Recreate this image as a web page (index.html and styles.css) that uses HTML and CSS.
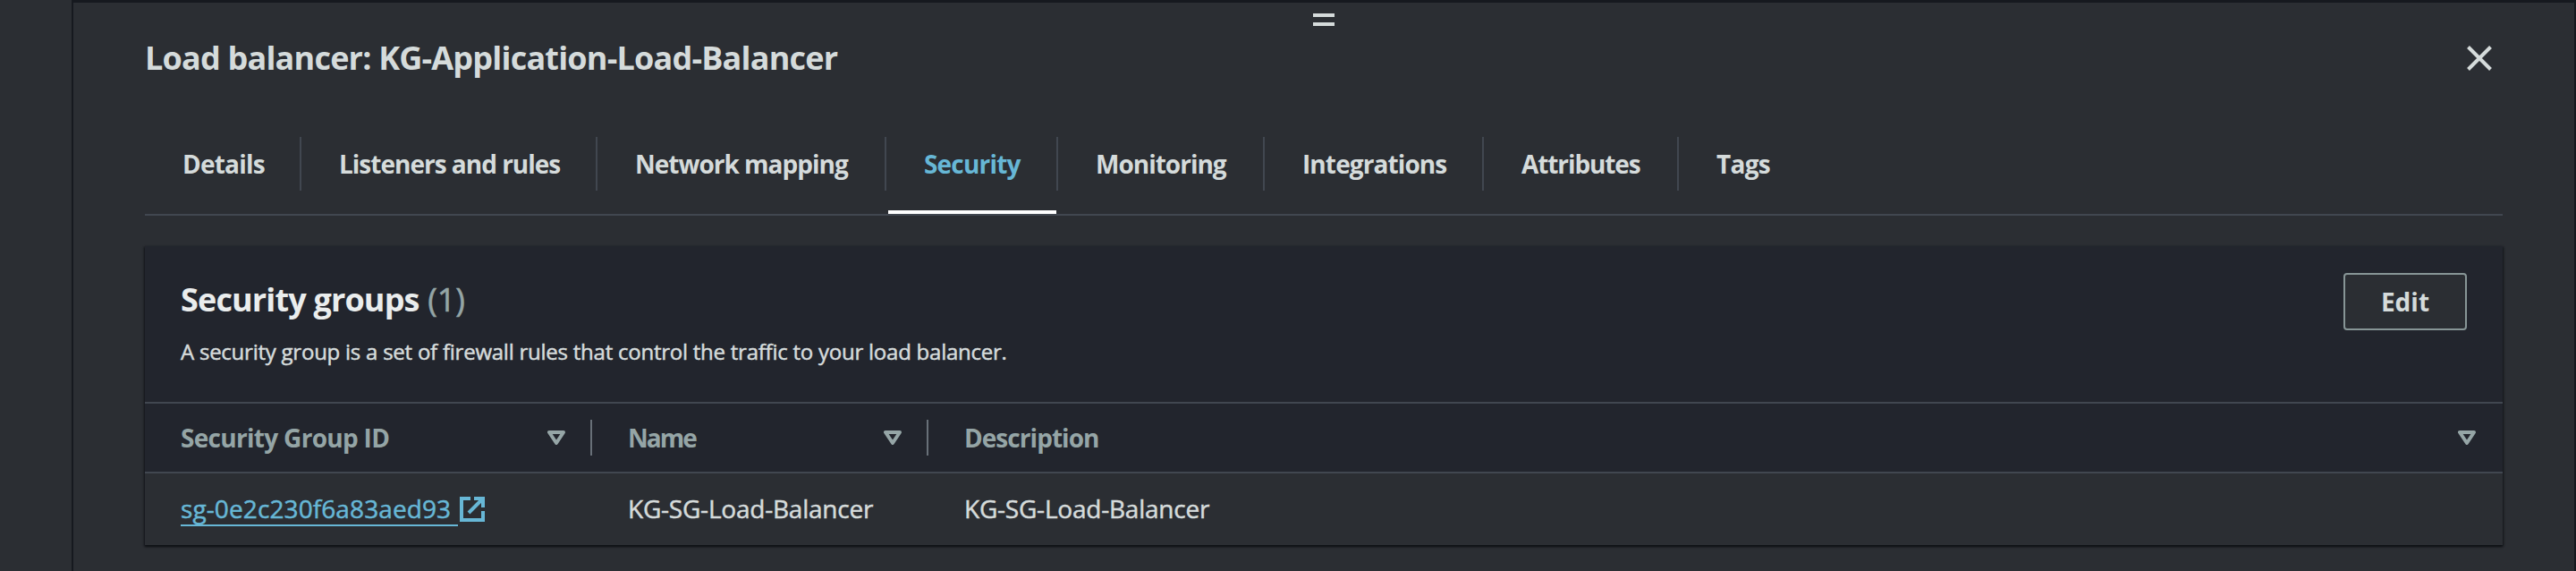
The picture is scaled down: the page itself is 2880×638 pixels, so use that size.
FILE: index.html
```html
<!DOCTYPE html>
<html lang="en">
<head>
<meta charset="utf-8">
<title>Load balancer: KG-Application-Load-Balancer</title>
<link rel="stylesheet" href="styles.css">
</head>
<body>
<main class="split-panel">
  <div class="resize-handle"></div>
  <header class="panel-header">
    <h1 class="panel-title">Load balancer: KG-Application-Load-Balancer</h1>
    <button class="close" aria-label="Close"><svg width="28" height="28" viewBox="0 0 28 28"><path d="M1.5 1.5l25 25M26.5 1.5l-25 25" fill="none" stroke="currentColor" stroke-width="4"/></svg></button>
  </header>
  <nav class="tabs">
    <a class="tab t-details">Details</a>
    <a class="tab t-listeners">Listeners and rules</a>
    <a class="tab t-network">Network mapping</a>
    <a class="tab t-security active">Security</a>
    <a class="tab t-monitoring">Monitoring</a>
    <a class="tab t-integrations">Integrations</a>
    <a class="tab t-attributes">Attributes</a>
    <a class="tab t-tags">Tags</a>
  </nav>
  <section class="card">
    <div class="card-header">
      <div>
        <h2 class="card-title">Security groups <span class="count">(1)</span></h2>
        <p class="card-desc">A security group is a set of firewall rules that control the traffic to your load balancer.</p>
      </div>
      <button class="edit">Edit</button>
    </div>
    <div class="row head">
      <div class="cell"><span class="h-id">Security Group ID</span><svg class="sort" width="20" height="16" viewBox="0 0 20 16"><path d="M2 2h16l-8 12z" fill="none" stroke="currentColor" stroke-width="4" stroke-linejoin="round"/></svg></div>
      <div class="cell"><span class="h-name">Name</span><svg class="sort" width="20" height="16" viewBox="0 0 20 16"><path d="M2 2h16l-8 12z" fill="none" stroke="currentColor" stroke-width="4" stroke-linejoin="round"/></svg></div>
      <div class="cell"><span class="h-desc">Description</span><svg class="sort" width="20" height="16" viewBox="0 0 20 16"><path d="M2 2h16l-8 12z" fill="none" stroke="currentColor" stroke-width="4" stroke-linejoin="round"/></svg></div>
    </div>
    <div class="row body">
      <div class="cell"><a class="link"><span class="link-text">sg-0e2c230f6a83aed93</span><svg class="external" width="28" height="28" viewBox="0 0 28 28"><path d="M12 2H2v24h24V16M16 2h10v10M25.5 2.5L10 18" fill="none" stroke="currentColor" stroke-width="4"/></svg></a></div>
      <div class="cell"><span class="value">KG-SG-Load-Balancer</span></div>
      <div class="cell"><span class="value">KG-SG-Load-Balancer</span></div>
    </div>
  </section>
</main>
</body>
</html>
```
FILE: styles.css
```css
* { box-sizing: border-box; }
body {
  margin: 0;
  height: 638px;
  overflow: hidden;
  padding-left: 80px;
  background: #2b2e33;
  color: #d5dbdb;
  font-family: "Open Sans", "Noto Sans", sans-serif;
  font-size: 28px;
}
h1, h2, p { margin: 0; }
button { font: inherit; color: inherit; }
svg { display: block; flex: none; }
.split-panel {
  height: 638px;
  border: solid #16191f;
  border-width: 3px 2px 0 2px;
  padding: 12px 80px 0;
}
.resize-handle {
  width: 24px;
  height: 14px;
  margin-left: 1306px;
  border: solid #d5dbdb;
  border-width: 4px 0;
}
.panel-header {
  display: flex;
  justify-content: space-between;
  align-items: center;
  height: 72px;
  padding-right: 12px;
}
.panel-title { font-size: 36px; line-height: 50px; letter-spacing: -.8px; }
.close { padding: 0; border: 0; background: none; }
.tabs {
  display: grid;
  grid-template-columns: 175px 331px 323px 192px 231px 245px 218px 1fr;
  height: 140px;
  padding-top: 52px;
  border-bottom: 2px solid #414750;
}
.tab {
  position: relative;
  height: 60px;
  line-height: 60px;
  padding-left: 42px;
  border-right: 2px solid #414750;
  font-weight: 700;
  white-space: nowrap;
}
.tab:last-child { border-right: 0; }
.t-details { letter-spacing: -.8px; }
.t-listeners { letter-spacing: -1px; }
.t-network { letter-spacing: -1px; }
.t-security { letter-spacing: -.8px; }
.t-monitoring { letter-spacing: -1px; }
.t-integrations { letter-spacing: -.9px; }
.t-attributes { letter-spacing: -1.1px; }
.t-tags { letter-spacing: -.7px; }
.active { color: #67b7d6; }
.active::after {
  content: "";
  position: absolute;
  left: 2px;
  right: 0;
  top: 82px;
  height: 4px;
  background: #fff;
}
.card {
  width: 2636px;
  margin-top: 34px;
  height: 334px;
  background: #2b2e33;
  box-shadow: 0 2px 2px #101216, 1px 1px 2px #191c21, -1px 1px 2px #191c21;
}
.card-header {
  display: flex;
  justify-content: space-between;
  height: 174px;
  padding: 30px 40px 0;
  background: #22252d;
}
.card-title { font-size: 36px; line-height: 60px; letter-spacing: -.85px; color: #eaeded; }
.count { margin-left: 1px; font-weight: 400; color: #95a5a6; letter-spacing: 0; -webkit-text-stroke: .6px; }
.card-desc { margin-top: 11px; font-size: 24px; line-height: 34px; letter-spacing: -.24px; -webkit-text-stroke: .5px; }
.edit {
  width: 138px;
  height: 64px;
  padding: 0;
  border: 2px solid #879596;
  border-radius: 4px;
  background: #2b2e33;
  font-weight: 700;
}
.row { display: grid; grid-template-columns: 500px 376px 1fr; }
.head {
  height: 80px;
  padding: 18px 0;
  border: solid #414750;
  border-width: 2px 0;
  background: #22252d;
  color: #95a5a6;
  font-weight: 700;
}
.cell { display: flex; align-items: center; justify-content: space-between; padding-left: 40px; }
.head .cell { height: 40px; line-height: 40px; padding-right: 28px; border-right: 2px solid #687078; }
.head .cell:last-child { padding-right: 30px; border-right: 0; }
.h-id { letter-spacing: -.7px; }
.h-name { letter-spacing: -2px; }
.h-desc { letter-spacing: -.95px; }
.body { height: 80px; }
.body .cell { line-height: 38px; }
.value { padding-bottom: 2px; letter-spacing: -.22px; -webkit-text-stroke: .5px; }
.link { display: flex; align-items: center; color: #67b7d6; gap: 2px; }
.link-text { width: 310px; height: 38px; line-height: 36px; border-bottom: 2px solid; letter-spacing: .1px; -webkit-text-stroke: .5px; }
```
